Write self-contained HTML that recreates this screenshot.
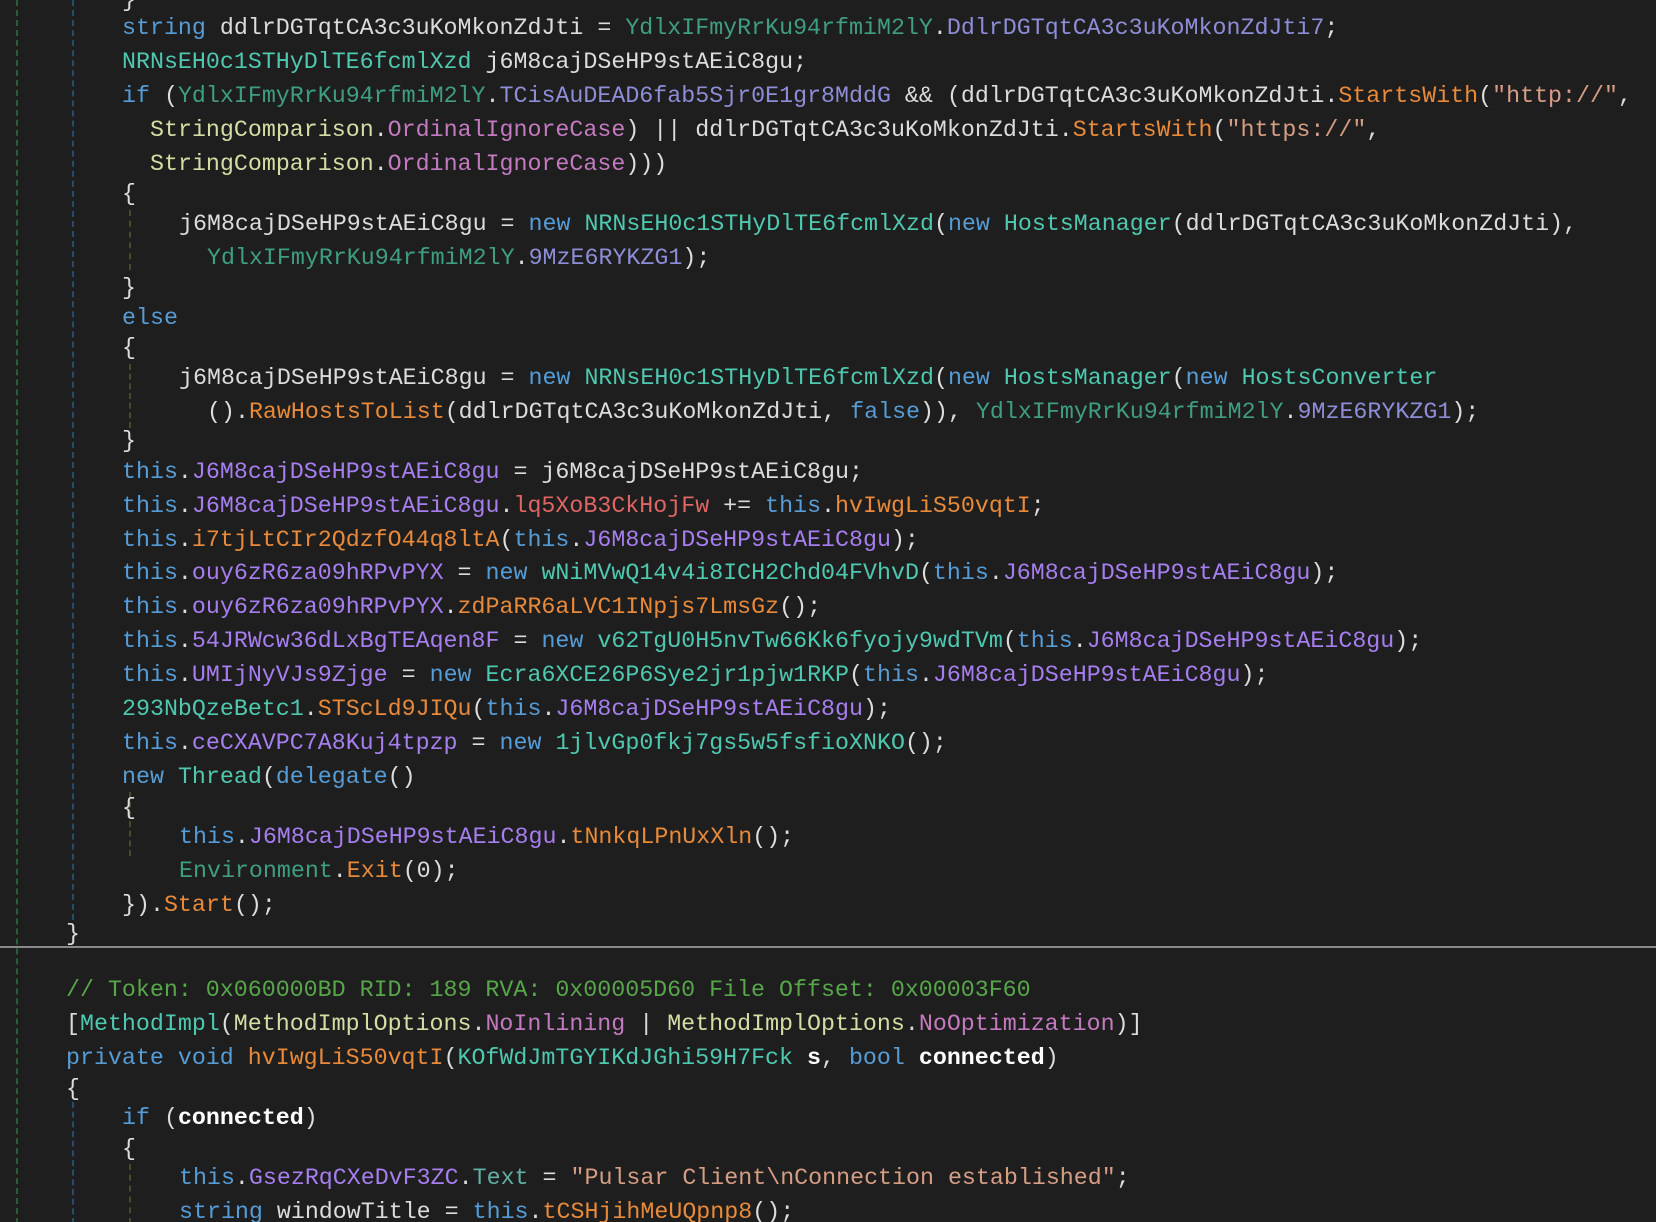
<!DOCTYPE html>
<html><head><meta charset="utf-8"><style>
html,body{margin:0;padding:0;background:#1e1e1e;width:1656px;height:1222px;overflow:hidden;position:relative}
#w{position:absolute;left:0;top:2px;width:1656px;height:1222px}
.l{position:absolute;white-space:pre;font-family:"Liberation Mono","DejaVu Sans Mono",monospace;font-size:23.3px;line-height:30px;height:30px;color:#dcdcdc}
.k{color:#569cd6}.t{color:#4ec9b0}.s{color:#3f9e82}.sc{color:#d3dea4}.e{color:#c47ac0}
.f{color:#a77ef0}.m{color:#e88a3a}.ev{color:#e06565}.c{color:#8e8ed8}.str{color:#d69d85}
.cm{color:#57a64a}.p{color:#ffffff;font-weight:bold}.pr{color:#5fb0a5}
.g{position:absolute;width:0;border-left:2px dashed}
.sep{position:absolute;left:0;width:1656px;top:944px;height:2px;background:#8a8a8a}
</style></head><body><div id="w">
<div class="g" style="left:16px;top:-2px;height:1224px;border-color:#2e5a3e"></div>
<div class="g" style="left:72px;top:-2px;height:930px;border-color:#2b4a6a"></div>
<div class="g" style="left:72px;top:1100px;height:122px;border-color:#2b4a6a"></div>
<div class="g" style="left:129px;top:208px;height:60px;border-color:#4a4a2a"></div>
<div class="g" style="left:129px;top:362px;height:64px;border-color:#4a4a2a"></div>
<div class="g" style="left:129px;top:790px;height:64px;border-color:#4a4a2a"></div>
<div class="g" style="left:129px;top:1162px;height:60px;border-color:#4a4a2a"></div>
<div class="sep"></div>

<div class="l" style="left:122px;top:-17px">}</div>
<div class="l" style="left:122px;top:11px"><span class="k">string</span> ddlrDGTqtCA3c3uKoMkonZdJti = <span class="s">YdlxIFmyRrKu94rfmiM2lY</span>.<span class="c">DdlrDGTqtCA3c3uKoMkonZdJti7</span>;</div>
<div class="l" style="left:122px;top:45px"><span class="t">NRNsEH0c1STHyDlTE6fcmlXzd</span> j6M8cajDSeHP9stAEiC8gu;</div>
<div class="l" style="left:122px;top:79px"><span class="k">if</span> (<span class="s">YdlxIFmyRrKu94rfmiM2lY</span>.<span class="c">TCisAuDEAD6fab5Sjr0E1gr8MddG</span> &amp;&amp; (ddlrDGTqtCA3c3uKoMkonZdJti.<span class="m">StartsWith</span>(<span class="str">"http://"</span>,</div>
<div class="l" style="left:150px;top:113px"><span class="sc">StringComparison</span>.<span class="e">OrdinalIgnoreCase</span>) || ddlrDGTqtCA3c3uKoMkonZdJti.<span class="m">StartsWith</span>(<span class="str">"https://"</span>,</div>
<div class="l" style="left:150px;top:147px"><span class="sc">StringComparison</span>.<span class="e">OrdinalIgnoreCase</span>)))</div>
<div class="l" style="left:122px;top:177px">{</div>
<div class="l" style="left:179px;top:207px">j6M8cajDSeHP9stAEiC8gu = <span class="k">new</span> <span class="t">NRNsEH0c1STHyDlTE6fcmlXzd</span>(<span class="k">new</span> <span class="t">HostsManager</span>(ddlrDGTqtCA3c3uKoMkonZdJti),</div>
<div class="l" style="left:207px;top:241px"><span class="s">YdlxIFmyRrKu94rfmiM2lY</span>.<span class="c">9MzE6RYKZG1</span>);</div>
<div class="l" style="left:122px;top:271px">}</div>
<div class="l" style="left:122px;top:301px"><span class="k">else</span></div>
<div class="l" style="left:122px;top:331px">{</div>
<div class="l" style="left:179px;top:361px">j6M8cajDSeHP9stAEiC8gu = <span class="k">new</span> <span class="t">NRNsEH0c1STHyDlTE6fcmlXzd</span>(<span class="k">new</span> <span class="t">HostsManager</span>(<span class="k">new</span> <span class="t">HostsConverter</span></div>
<div class="l" style="left:207px;top:395px">().<span class="m">RawHostsToList</span>(ddlrDGTqtCA3c3uKoMkonZdJti, <span class="k">false</span>)), <span class="s">YdlxIFmyRrKu94rfmiM2lY</span>.<span class="c">9MzE6RYKZG1</span>);</div>
<div class="l" style="left:122px;top:424px">}</div>
<div class="l" style="left:122px;top:455px"><span class="k">this</span>.<span class="f">J6M8cajDSeHP9stAEiC8gu</span> = j6M8cajDSeHP9stAEiC8gu;</div>
<div class="l" style="left:122px;top:489px"><span class="k">this</span>.<span class="f">J6M8cajDSeHP9stAEiC8gu</span>.<span class="ev">lq5XoB3CkHojFw</span> += <span class="k">this</span>.<span class="m">hvIwgLiS50vqtI</span>;</div>
<div class="l" style="left:122px;top:523px"><span class="k">this</span>.<span class="m">i7tjLtCIr2QdzfO44q8ltA</span>(<span class="k">this</span>.<span class="f">J6M8cajDSeHP9stAEiC8gu</span>);</div>
<div class="l" style="left:122px;top:556px"><span class="k">this</span>.<span class="f">ouy6zR6za09hRPvPYX</span> = <span class="k">new</span> <span class="t">wNiMVwQ14v4i8ICH2Chd04FVhvD</span>(<span class="k">this</span>.<span class="f">J6M8cajDSeHP9stAEiC8gu</span>);</div>
<div class="l" style="left:122px;top:590px"><span class="k">this</span>.<span class="f">ouy6zR6za09hRPvPYX</span>.<span class="m">zdPaRR6aLVC1INpjs7LmsGz</span>();</div>
<div class="l" style="left:122px;top:624px"><span class="k">this</span>.<span class="f">54JRWcw36dLxBgTEAqen8F</span> = <span class="k">new</span> <span class="t">v62TgU0H5nvTw66Kk6fyojy9wdTVm</span>(<span class="k">this</span>.<span class="f">J6M8cajDSeHP9stAEiC8gu</span>);</div>
<div class="l" style="left:122px;top:658px"><span class="k">this</span>.<span class="f">UMIjNyVJs9Zjge</span> = <span class="k">new</span> <span class="t">Ecra6XCE26P6Sye2jr1pjw1RKP</span>(<span class="k">this</span>.<span class="f">J6M8cajDSeHP9stAEiC8gu</span>);</div>
<div class="l" style="left:122px;top:692px"><span class="t">293NbQzeBetc1</span>.<span class="m">STScLd9JIQu</span>(<span class="k">this</span>.<span class="f">J6M8cajDSeHP9stAEiC8gu</span>);</div>
<div class="l" style="left:122px;top:726px"><span class="k">this</span>.<span class="f">ceCXAVPC7A8Kuj4tpzp</span> = <span class="k">new</span> <span class="t">1jlvGp0fkj7gs5w5fsfioXNKO</span>();</div>
<div class="l" style="left:122px;top:760px"><span class="k">new</span> <span class="t">Thread</span>(<span class="k">delegate</span>()</div>
<div class="l" style="left:122px;top:791px">{</div>
<div class="l" style="left:179px;top:820px"><span class="k">this</span>.<span class="f">J6M8cajDSeHP9stAEiC8gu</span>.<span class="m">tNnkqLPnUxXln</span>();</div>
<div class="l" style="left:179px;top:854px"><span class="s">Environment</span>.<span class="m">Exit</span>(0);</div>
<div class="l" style="left:122px;top:888px">}).<span class="m">Start</span>();</div>
<div class="l" style="left:66px;top:917px">}</div>
<div class="l" style="left:66px;top:973px"><span class="cm">// Token: 0x060000BD RID: 189 RVA: 0x00005D60 File Offset: 0x00003F60</span></div>
<div class="l" style="left:66px;top:1007px">[<span class="t">MethodImpl</span>(<span class="sc">MethodImplOptions</span>.<span class="e">NoInlining</span> | <span class="sc">MethodImplOptions</span>.<span class="e">NoOptimization</span>)]</div>
<div class="l" style="left:66px;top:1041px"><span class="k">private</span> <span class="k">void</span> <span class="m">hvIwgLiS50vqtI</span>(<span class="t">KOfWdJmTGYIKdJGhi59H7Fck</span> <span class="p">s</span>, <span class="k">bool</span> <span class="p">connected</span>)</div>
<div class="l" style="left:66px;top:1072px">{</div>
<div class="l" style="left:122px;top:1101px"><span class="k">if</span> (<span class="p">connected</span>)</div>
<div class="l" style="left:122px;top:1132px">{</div>
<div class="l" style="left:179px;top:1161px"><span class="k">this</span>.<span class="f">GsezRqCXeDvF3ZC</span>.<span class="pr">Text</span> = <span class="str">"Pulsar Client\nConnection established"</span>;</div>
<div class="l" style="left:179px;top:1195px"><span class="k">string</span> windowTitle = <span class="k">this</span>.<span class="m">tCSHjihMeUQpnp8</span>();</div>
</div></body></html>
